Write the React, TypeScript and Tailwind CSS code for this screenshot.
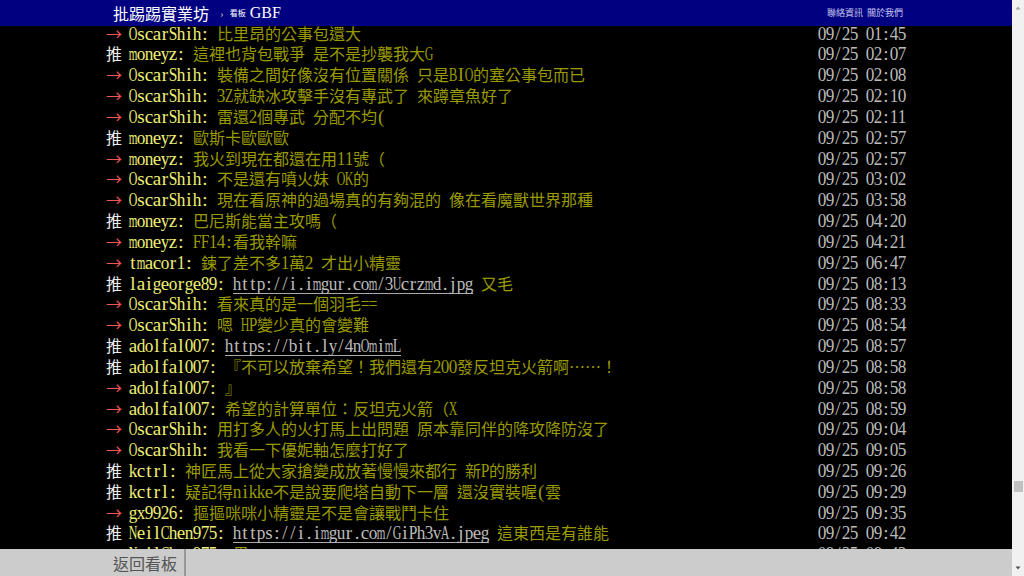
import React from "react";

type Part = { t: string; link?: boolean };
type Row = { tag: "推" | "→"; user: string; parts: Part[]; time: string };

const r = (tag: "推" | "→", user: string, text: string | Part[], time: string): Row => ({
  tag,
  user,
  parts: typeof text === "string" ? [{ t: text }] : text,
  time,
});

const rows: Row[] = [
  r("→", "OscarShih", "比里昂的公事包還大", "09/25 01:45"),
  r("推", "moneyz", "這裡也背包戰爭 是不是抄襲我大G", "09/25 02:07"),
  r("→", "OscarShih", "裝備之間好像沒有位置關係 只是BIO的塞公事包而已", "09/25 02:08"),
  r("→", "OscarShih", "3Z就缺冰攻擊手沒有專武了 來蹲章魚好了", "09/25 02:10"),
  r("→", "OscarShih", "雷還2個專武 分配不均(", "09/25 02:11"),
  r("推", "moneyz", "歐斯卡歐歐歐", "09/25 02:57"),
  r("→", "moneyz", "我火到現在都還在用11號（", "09/25 02:57"),
  r("→", "OscarShih", "不是還有噴火妹 OK的", "09/25 03:02"),
  r("→", "OscarShih", "現在看原神的過場真的有夠混的 像在看魔獸世界那種", "09/25 03:58"),
  r("推", "moneyz", "巴尼斯能當主攻嗎（", "09/25 04:20"),
  r("→", "moneyz", "FF14:看我幹嘛", "09/25 04:21"),
  r("→", "tmacor1", "鍊了差不多1萬2 才出小精靈", "09/25 06:47"),
  r("推", "laigeorge89", [{ t: "http://i.imgur.com/3Ucrzmd.jpg", link: true }, { t: " 又毛" }], "09/25 08:13"),
  r("→", "OscarShih", "看來真的是一個羽毛==", "09/25 08:33"),
  r("→", "OscarShih", "嗯 HP變少真的會變難", "09/25 08:54"),
  r("推", "adolfal007", [{ t: "https://bit.ly/4nOmimL", link: true }], "09/25 08:57"),
  r("推", "adolfal007", "『不可以放棄希望！我們還有200發反坦克火箭啊……！", "09/25 08:58"),
  r("→", "adolfal007", "』", "09/25 08:58"),
  r("→", "adolfal007", "希望的計算單位：反坦克火箭（X", "09/25 08:59"),
  r("→", "OscarShih", "用打多人的火打馬上出問題 原本靠同伴的降攻降防沒了", "09/25 09:04"),
  r("→", "OscarShih", "我看一下優妮軸怎麼打好了", "09/25 09:05"),
  r("推", "kctrl", "神匠馬上從大家搶變成放著慢慢來都行 新P的勝利", "09/25 09:26"),
  r("推", "kctrl", "疑記得nikke不是說要爬塔自動下一層 還沒實裝喔(雲", "09/25 09:29"),
  r("→", "gx9926", "摳摳咪咪小精靈是不是會讓戰鬥卡住", "09/25 09:35"),
  r("推", "NeilChen975", [{ t: "https://i.imgur.com/GiPh3vA.jpeg", link: true }, { t: " 這東西是有誰能" }], "09/25 09:42"),
  r("→", "NeilChen975", "黑", "09/25 09:43"),
];

const font = { fontFamily: "'Liberation Serif', 'Noto Sans CJK TC', serif" };
const cjk = { fontFamily: "'Noto Sans CJK TC', sans-serif" };

// Approximate advance widths of Liberation Serif (Times metrics), per 1000 em.
const WID: Record<string, number> = {
  a: 444, b: 500, c: 444, d: 500, e: 444, f: 333, g: 500, h: 500, i: 278, j: 278, k: 500, l: 278, m: 778,
  n: 500, o: 500, p: 500, q: 500, r: 333, s: 389, t: 278, u: 500, v: 500, w: 722, x: 500, y: 500, z: 444,
  A: 722, B: 667, C: 667, D: 722, E: 611, F: 556, G: 722, H: 722, I: 333, J: 389, K: 722, L: 611, M: 889,
  N: 722, O: 722, P: 556, Q: 722, R: 667, S: 556, T: 611, U: 722, V: 722, W: 944, X: 722, Y: 722, Z: 611,
  "=": 564, "/": 278, ":": 278, ".": 250, "(": 333, ")": 333,
};
const FS = 19;

function mono(s: string, keyBase: string): React.ReactNode[] {
  const out: React.ReactNode[] = [];
  let run = "";
  let k = 0;
  const flush = () => {
    if (run) {
      out.push(
        <span key={keyBase + "r" + k++} style={cjk} className="text-[16px]">
          {run}
        </span>
      );
      run = "";
    }
  };
  for (const c of s) {
    if (c.charCodeAt(0) < 128) {
      flush();
      if (c === " ") {
        out.push(<span key={keyBase + "s" + k++} className="inline-block w-[8px]" />);
      } else {
        const w = ((WID[c] ?? 500) * FS) / 1000;
        const sc = Math.min(1, 8.6 / w);
        out.push(
          <span
            key={keyBase + "c" + k++}
            className="inline-flex justify-center w-[8px] text-[19px]"
            style={{ transform: `scaleX(${sc})` }}
          >
            {c}
          </span>
        );
      }
    } else {
      run += c;
    }
  }
  flush();
  return out;
}

export default function App() {
  return (
    <div className="flex w-[1024px] h-[576px] overflow-hidden bg-black" style={font}>
      <div className="relative w-[1012px] h-full overflow-hidden">
        <div className="w-[800px] mx-auto pt-[22.6px] text-[16px]">
          {rows.map((row, i) => (
            <div key={i} className="flex items-baseline h-[20.83px] leading-[20.83px] whitespace-nowrap">
              {row.tag === "推" ? (
                <span className="w-[23px] shrink-0 text-[16px] text-[#eee]" style={cjk}>
                  推
                </span>
              ) : (
                <span className="w-[23px] shrink-0 text-[16px] text-[#e55]" style={cjk}>
                  →
                </span>
              )}
              <span className="flex-1">
                <span className="text-[#ee7]">{mono(row.user + ":", "u")}</span>
                <span className="text-[#990]">
                  {mono(" ", "sp")}
                  {row.parts.map((p, j) =>
                    p.link ? (
                      <span key={j} className="text-[#bbb] border-b border-[#aaa]">
                        {mono(p.t, "l" + j)}
                      </span>
                    ) : (
                      <span key={j}>{mono(p.t, "p" + j)}</span>
                    )
                  )}
                </span>
              </span>
              <span className="text-[#bbb] shrink-0">{mono(row.time, "t")}</span>
            </div>
          ))}
        </div>

        <div className="absolute top-0 left-0 right-0 h-[26px] bg-[#000080]">
          <div className="w-[800px] mx-auto h-full flex items-center pl-[7px] pr-[3px]">
            <span className="text-white text-[16px]" style={cjk}>批踢踢實業坊</span>
            <span className="text-[#bbb] text-[11px] ml-[11px]">›</span>
            <span className="text-white text-[8px] ml-[6px]" style={cjk}>看板</span>
            <span className="text-white text-[16px] ml-[4px]">GBF</span>
            <div className="ml-auto flex gap-[4px] text-[9px] text-[#c8c8f0]" style={cjk}>
              <span>聯絡資訊</span>
              <span>關於我們</span>
            </div>
          </div>
        </div>

        <div className="absolute bottom-0 left-0 right-0 h-[27px] bg-[#cccccc]">
          <div className="w-[800px] mx-auto h-full flex">
            <div
              className="h-full flex items-center pl-[7px] pr-[7px] border-r-2 border-[#999] text-[16px] text-[#555]"
              style={cjk}
            >
              返回看板
            </div>
          </div>
        </div>
      </div>

      <div className="w-[12px] h-full bg-[#f1f1f1] flex flex-col items-center justify-between relative">
        <svg width="12" height="14" viewBox="0 0 12 14" className="mt-[1px]">
          <path d="M3.5 8.5 L6 5.5 L8.5 8.5 Z" fill="#a3a3a3" />
        </svg>
        <div className="absolute top-[481px] left-[2px] w-[9px] h-[11px] bg-[#c1c1c1]" />
        <svg width="12" height="14" viewBox="0 0 12 14" className="mb-[1px]">
          <path d="M3.5 5.5 L6 8.5 L8.5 5.5 Z" fill="#505050" />
        </svg>
      </div>
    </div>
  );
}
